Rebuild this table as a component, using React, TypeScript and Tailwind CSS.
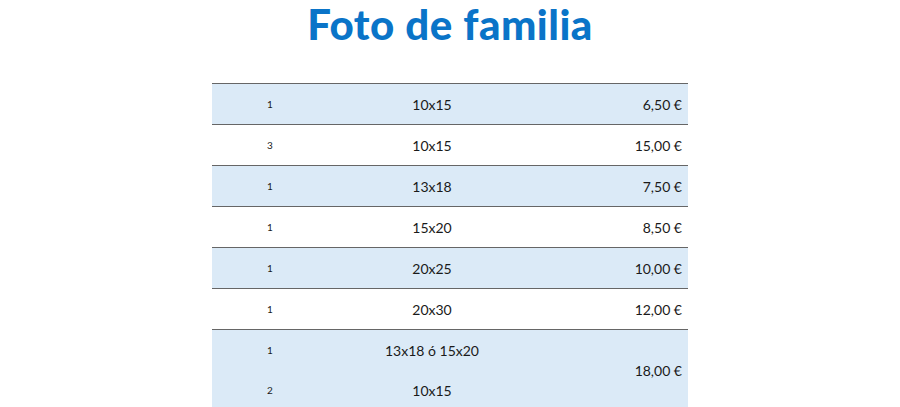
const rows = [
  { qty: ["1"], size: ["10x15"], price: "6,50 €", tint: true },
  { qty: ["3"], size: ["10x15"], price: "15,00 €", tint: false },
  { qty: ["1"], size: ["13x18"], price: "7,50 €", tint: true },
  { qty: ["1"], size: ["15x20"], price: "8,50 €", tint: false },
  { qty: ["1"], size: ["20x25"], price: "10,00 €", tint: true },
  { qty: ["1"], size: ["20x30"], price: "12,00 €", tint: false },
  { qty: ["1", "2"], size: ["13x18 ó 15x20", "10x15"], price: "18,00 €", tint: true },
];

export default function App() {
  return (
    <div className="h-[407px] w-[900px] overflow-hidden bg-white font-['Lato','Open_Sans',sans-serif] text-[#1a1a1a]">
      <h1 className="pt-[1px] text-center text-[42px] font-black leading-[46px] tracking-[0.5px] text-[#0a74c8]">
        Foto de familia
      </h1>

      <div className="mx-auto mt-[36px] w-[476px] border-t border-[#666]">
        {rows.map((r, i) => (
          <div
            key={i}
            className={`flex items-center border-b border-[#666] ${r.tint ? "bg-[#dbeaf7]" : "bg-white"}`}
          >
            <div className="flex w-[400px] flex-col">
              {r.qty.map((q, j) => (
                <div key={j} className="flex h-[40px] items-center">
                  <span className="w-[116px] text-center text-[10px]">{q}</span>
                  <span className="w-[208px] whitespace-nowrap text-center text-[14px]">{r.size[j]}</span>
                </div>
              ))}
            </div>
            <span className="flex-1 whitespace-nowrap pr-[6px] text-right text-[14px]">{r.price}</span>
          </div>
        ))}
      </div>
    </div>
  );
}
